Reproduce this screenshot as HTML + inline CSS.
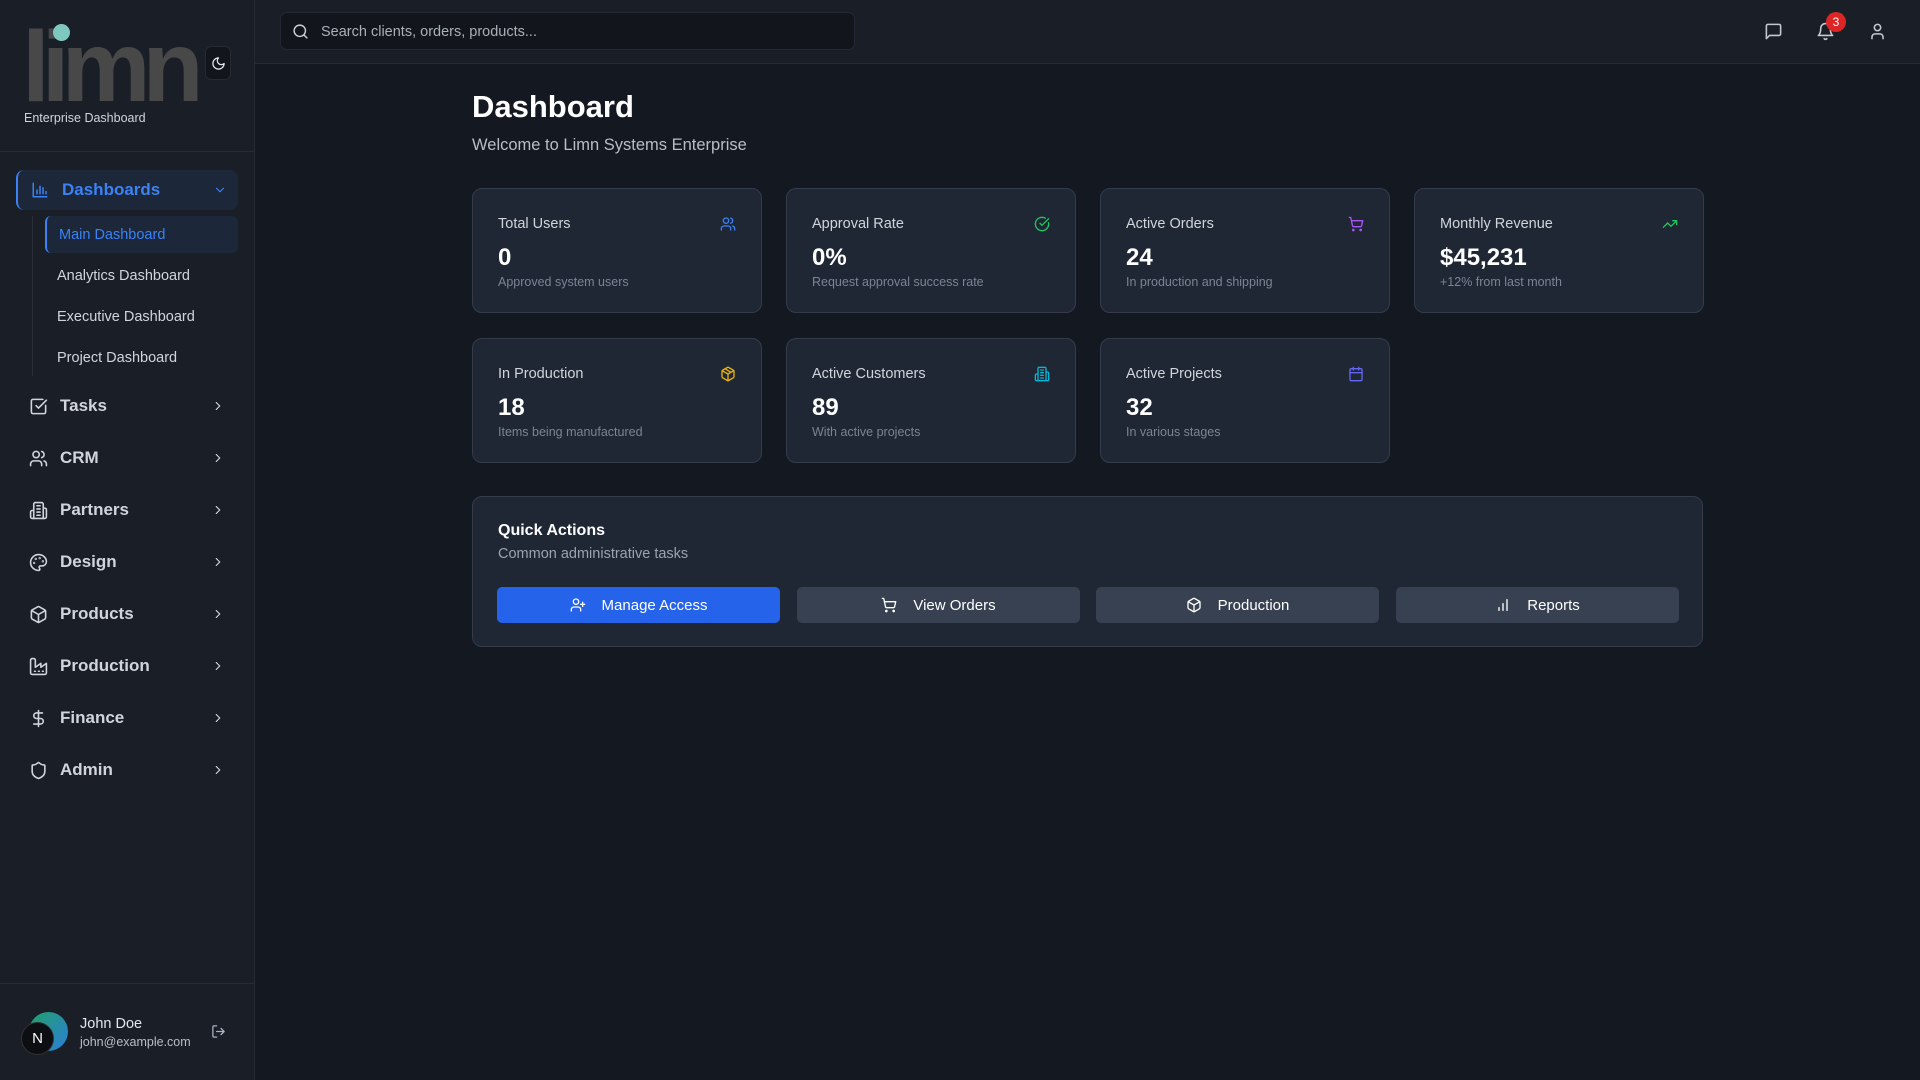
<!DOCTYPE html>
<html><head><meta charset="utf-8"><style>
*{box-sizing:border-box;margin:0;padding:0}
body{width:1920px;height:1080px;background:#141820;font-family:"Liberation Sans",sans-serif;color:#e5e7eb;position:relative;overflow:hidden}
.abs{position:absolute}
svg{fill:none;stroke:currentColor;stroke-width:2;stroke-linecap:round;stroke-linejoin:round}
#side{left:0;top:0;width:255px;height:1080px;background:#1a1e27;border-right:1px solid #252a34}
#hdr{left:255px;top:0;width:1665px;height:64px;background:#1a1e27;border-bottom:1px solid #262b35}
.nav{position:absolute;left:16px;width:222px;height:40px;display:flex;align-items:center;color:#d1d5db;font-size:17px;font-weight:bold}
.nav svg{position:absolute;left:13px;width:19px;height:19px}
.nav span{position:absolute;left:44px}
.nav .ch{position:absolute;left:195px;width:14px;height:14px}
.sub{position:absolute;left:57px;font-size:14.5px;color:#d1d5db}
.card{position:absolute;width:290px;height:125px;background:#1f2735;border:1px solid #343c4b;border-radius:10px}
.card .t{position:absolute;left:25px;top:27px;font-size:14.5px;color:#d1d5db}
.card .v{position:absolute;left:25px;top:55px;font-size:24px;font-weight:bold;color:#fff}
.card .d{position:absolute;left:25px;top:86px;font-size:12.5px;color:#7b8494}
.card svg{position:absolute;right:25px;top:27px;width:16px;height:16px}
.btn{position:absolute;top:587px;height:36px;width:283px;border-radius:5px;background:#374151;color:#fff;font-size:15px;display:flex;align-items:center;justify-content:center;gap:16px}
.btn svg{width:16px;height:16px}
</style></head><body>
<div id="side" class="abs">
  <div class="abs" style="left:22px;top:17px;font-size:100px;font-weight:bold;color:#484848;letter-spacing:-8px;line-height:100px;font-family:'Liberation Sans',sans-serif">limn</div>
  <div class="abs" style="left:53px;top:24px;width:17px;height:17px;border-radius:50%;background:#7fc8c0"></div>
  <div class="abs" style="left:205px;top:46px;width:26px;height:34px;background:#12151c;border-radius:6px;border:1px solid #252a33;color:#e5e7eb"><svg style="position:absolute;left:5px;top:9px;width:15px;height:15px" viewBox="0 0 24 24"><path d="M12 3a6 6 0 0 0 9 9 9 9 0 1 1-9-9Z"/></svg></div>
  <div class="abs" style="left:24px;top:111px;font-size:12.5px;color:#d1d5db">Enterprise Dashboard</div>
  <div class="abs" style="left:0;top:151px;width:255px;height:1px;background:#272c36"></div>
  <div class="nav" style="top:170px;background:#1c2739;border-left:2px solid #3b82f6;border-radius:8px;color:#3b82f6">
    <svg viewBox="0 0 24 24"><path d="M3 3v18h18M8 17v-5M12 17V7M16 17v-8M20 17v-3" transform="scale(.95)"/></svg><span style="font-size:17px">Dashboards</span>
    <svg class="ch" viewBox="0 0 24 24"><path d="m6 9 6 6 6-6"/></svg></div>
  <div class="abs" style="left:32px;top:216px;width:1px;height:160px;background:#2a2f39"></div>
  <div class="abs" style="left:45px;top:216px;width:193px;height:37px;background:#1c2739;border-left:2px solid #3b82f6;border-radius:6px"></div>
  <div class="sub" style="top:227px;left:59px;color:#3b82f6">Main Dashboard</div>
  <div class="sub" style="top:268px">Analytics Dashboard</div>
  <div class="sub" style="top:309px">Executive Dashboard</div>
  <div class="sub" style="top:350px">Project Dashboard</div>
  <div class="nav" style="top:386px"><svg viewBox="0 0 24 24"><path d="M21 10.5V19a2 2 0 0 1-2 2H5a2 2 0 0 1-2-2V5a2 2 0 0 1 2-2h12.5"/><path d="m9 11 3 3L22 4"/></svg><span>Tasks</span><svg class="ch" viewBox="0 0 24 24"><path d="m9 18 6-6-6-6"/></svg></div>
  <div class="nav" style="top:438px"><svg viewBox="0 0 24 24"><path d="M16 21v-2a4 4 0 0 0-4-4H6a4 4 0 0 0-4 4v2"/><circle cx="9" cy="7" r="4"/><path d="M22 21v-2a4 4 0 0 0-3-3.87M16 3.13a4 4 0 0 1 0 7.75"/></svg><span>CRM</span><svg class="ch" viewBox="0 0 24 24"><path d="m9 18 6-6-6-6"/></svg></div>
  <div class="nav" style="top:490px"><svg viewBox="0 0 24 24"><path d="M6 22V4a2 2 0 0 1 2-2h8a2 2 0 0 1 2 2v18Z"/><path d="M6 12H4a2 2 0 0 0-2 2v6a2 2 0 0 0 2 2h2M18 9h2a2 2 0 0 1 2 2v9a2 2 0 0 1-2 2h-2M10 6h4M10 10h4M10 14h4M10 18h4"/></svg><span>Partners</span><svg class="ch" viewBox="0 0 24 24"><path d="m9 18 6-6-6-6"/></svg></div>
  <div class="nav" style="top:542px"><svg viewBox="0 0 24 24"><circle cx="13.5" cy="6.5" r=".5"/><circle cx="17.5" cy="10.5" r=".5"/><circle cx="8.5" cy="7.5" r=".5"/><circle cx="6.5" cy="12.5" r=".5"/><path d="M12 2C6.5 2 2 6.5 2 12s4.5 10 10 10c.93 0 1.65-.75 1.65-1.69 0-.44-.18-.84-.44-1.13-.29-.29-.44-.65-.44-1.13a1.64 1.64 0 0 1 1.67-1.67h2c3.05 0 5.55-2.5 5.55-5.55C21.97 6.01 17.46 2 12 2z"/></svg><span>Design</span><svg class="ch" viewBox="0 0 24 24"><path d="m9 18 6-6-6-6"/></svg></div>
  <div class="nav" style="top:594px"><svg viewBox="0 0 24 24"><path d="M21 8a2 2 0 0 0-1-1.73l-7-4a2 2 0 0 0-2 0l-7 4A2 2 0 0 0 3 8v8a2 2 0 0 0 1 1.73l7 4a2 2 0 0 0 2 0l7-4A2 2 0 0 0 21 16Z"/><path d="m3.3 7 8.7 5 8.7-5M12 22V12"/></svg><span>Products</span><svg class="ch" viewBox="0 0 24 24"><path d="m9 18 6-6-6-6"/></svg></div>
  <div class="nav" style="top:646px"><svg viewBox="0 0 24 24"><path d="M2 20a2 2 0 0 0 2 2h16a2 2 0 0 0 2-2V8l-7 5V8l-7 5V4a2 2 0 0 0-2-2H4a2 2 0 0 0-2 2Z"/><path d="M17 18h1M12 18h1M7 18h1"/></svg><span>Production</span><svg class="ch" viewBox="0 0 24 24"><path d="m9 18 6-6-6-6"/></svg></div>
  <div class="nav" style="top:698px"><svg viewBox="0 0 24 24"><path d="M12 2v20M17 5H9.5a3.5 3.5 0 0 0 0 7h5a3.5 3.5 0 0 1 0 7H6"/></svg><span>Finance</span><svg class="ch" viewBox="0 0 24 24"><path d="m9 18 6-6-6-6"/></svg></div>
  <div class="nav" style="top:750px"><svg viewBox="0 0 24 24"><path d="M20 13c0 5-3.5 7.5-7.66 8.95a1 1 0 0 1-.67-.01C7.5 20.5 4 18 4 13V6a1 1 0 0 1 1-1c2 0 4.5-1.2 6.24-2.72a1.17 1.17 0 0 1 1.52 0C14.51 3.81 17 5 19 5a1 1 0 0 1 1 1z"/></svg><span>Admin</span><svg class="ch" viewBox="0 0 24 24"><path d="m9 18 6-6-6-6"/></svg></div>
  <div class="abs" style="left:0;top:983px;width:255px;height:1px;background:#272c36"></div>
  <div class="abs" style="left:29px;top:1012px;width:39px;height:39px;border-radius:50%;background:linear-gradient(135deg,#22a06b,#2b7fd8)"></div>
  <div class="abs" style="left:21px;top:1022px;width:33px;height:33px;border-radius:50%;background:#0c0e12;border:1px solid #333;color:#fff;font-size:15px;text-align:center;line-height:31px">N</div>
  <div class="abs" style="left:80px;top:1016px;font-size:14.5px;color:#e5e7eb">John Doe</div>
  <div class="abs" style="left:80px;top:1035px;font-size:12.5px;color:#b8bec8">john@example.com</div>
  <svg class="abs" style="left:211px;top:1024px;width:15px;height:15px;color:#aeb4be" viewBox="0 0 24 24"><path d="M9 21H5a2 2 0 0 1-2-2V5a2 2 0 0 1 2-2h4M16 17l5-5-5-5M21 12H9"/></svg>
</div>
<div id="hdr" class="abs">
  <div class="abs" style="left:25px;top:12px;width:575px;height:38px;background:#12151c;border:1px solid #232833;border-radius:7px"></div>
  <svg class="abs" style="left:37px;top:23px;width:17px;height:17px;color:#cbd0d8" viewBox="0 0 24 24"><circle cx="11" cy="11" r="8"/><path d="m21 21-4.3-4.3"/></svg>
  <div class="abs" style="left:66px;top:24px;font-size:14.5px;color:#aab0ba">Search clients, orders, products...</div>
  <svg class="abs" style="left:1509px;top:22px;width:19px;height:19px;color:#c4c9d1" viewBox="0 0 24 24"><path d="M21 15a2 2 0 0 1-2 2H7l-4 4V5a2 2 0 0 1 2-2h14a2 2 0 0 1 2 2z"/></svg>
  <svg class="abs" style="left:1561px;top:22px;width:19px;height:19px;color:#c4c9d1" viewBox="0 0 24 24"><path d="M6 8a6 6 0 0 1 12 0c0 7 3 9 3 9H3s3-2 3-9M10.3 21a1.94 1.94 0 0 0 3.4 0"/></svg>
  <div class="abs" style="left:1571px;top:12px;width:20px;height:20px;border-radius:50%;background:#dc2626;color:#fff;font-size:12px;text-align:center;line-height:20px">3</div>
  <svg class="abs" style="left:1613px;top:22px;width:19px;height:19px;color:#c4c9d1" viewBox="0 0 24 24"><path d="M19 21v-2a4 4 0 0 0-4-4H9a4 4 0 0 0-4 4v2"/><circle cx="12" cy="7" r="4"/></svg>
</div>
<div class="abs" style="left:472px;top:89px;font-size:31px;font-weight:bold;color:#fff">Dashboard</div>
<div class="abs" style="left:472px;top:136px;font-size:16.5px;color:#b8bec8">Welcome to Limn Systems Enterprise</div>

<div class="card" style="left:472px;top:188px"><div class="t">Total Users</div><div class="v">0</div><div class="d">Approved system users</div><svg style="color:#3b82f6" viewBox="0 0 24 24"><path d="M16 21v-2a4 4 0 0 0-4-4H6a4 4 0 0 0-4 4v2"/><circle cx="9" cy="7" r="4"/><path d="M22 21v-2a4 4 0 0 0-3-3.87M16 3.13a4 4 0 0 1 0 7.75"/></svg></div>
<div class="card" style="left:786px;top:188px"><div class="t">Approval Rate</div><div class="v">0%</div><div class="d">Request approval success rate</div><svg style="color:#22c55e" viewBox="0 0 24 24"><path d="M21.8 10A10 10 0 1 1 17 3.34"/><path d="m9 11 3 3L22 4"/></svg></div>
<div class="card" style="left:1100px;top:188px"><div class="t">Active Orders</div><div class="v">24</div><div class="d">In production and shipping</div><svg style="color:#a855f7" viewBox="0 0 24 24"><circle cx="8" cy="21" r="1"/><circle cx="19" cy="21" r="1"/><path d="M2.05 2.05h2l2.66 12.42a2 2 0 0 0 2 1.58h9.78a2 2 0 0 0 1.95-1.57l1.65-7.43H5.12"/></svg></div>
<div class="card" style="left:1414px;top:188px"><div class="t">Monthly Revenue</div><div class="v">$45,231</div><div class="d">+12% from last month</div><svg style="color:#22c55e" viewBox="0 0 24 24"><path d="m22 7-8.5 8.5-5-5L2 17M16 7h6v6"/></svg></div>
<div class="card" style="left:472px;top:338px"><div class="t">In Production</div><div class="v">18</div><div class="d">Items being manufactured</div><svg style="color:#eab308" viewBox="0 0 24 24"><path d="M21 8a2 2 0 0 0-1-1.73l-7-4a2 2 0 0 0-2 0l-7 4A2 2 0 0 0 3 8v8a2 2 0 0 0 1 1.73l7 4a2 2 0 0 0 2 0l7-4A2 2 0 0 0 21 16Z"/><path d="m3.3 7 8.7 5 8.7-5M12 22V12M7.5 4.27l9 5.15"/></svg></div>
<div class="card" style="left:786px;top:338px"><div class="t">Active Customers</div><div class="v">89</div><div class="d">With active projects</div><svg style="color:#06b6d4" viewBox="0 0 24 24"><path d="M6 22V4a2 2 0 0 1 2-2h8a2 2 0 0 1 2 2v18Z"/><path d="M6 12H4a2 2 0 0 0-2 2v6a2 2 0 0 0 2 2h2M18 9h2a2 2 0 0 1 2 2v9a2 2 0 0 1-2 2h-2M10 6h4M10 10h4M10 14h4M10 18h4"/></svg></div>
<div class="card" style="left:1100px;top:338px"><div class="t">Active Projects</div><div class="v">32</div><div class="d">In various stages</div><svg style="color:#6366f1" viewBox="0 0 24 24"><rect x="3" y="4" width="18" height="18" rx="2"/><path d="M16 2v4M8 2v4M3 10h18"/></svg></div>

<div class="abs" style="left:472px;top:496px;width:1231px;height:151px;background:#1f2735;border:1px solid #343c4b;border-radius:10px">
  <div class="abs" style="left:25px;top:25px;font-size:16px;font-weight:bold;color:#fff">Quick Actions</div>
  <div class="abs" style="left:25px;top:49px;font-size:14.5px;color:#9ca3af">Common administrative tasks</div>
</div>
<div class="btn" style="left:497px;background:#2563eb"><svg viewBox="0 0 24 24"><path d="M16 21v-2a4 4 0 0 0-4-4H6a4 4 0 0 0-4 4v2"/><circle cx="9" cy="7" r="4"/><path d="M19 8v6M22 11h-6"/></svg>Manage Access</div>
<div class="btn" style="left:797px"><svg viewBox="0 0 24 24"><circle cx="8" cy="21" r="1"/><circle cx="19" cy="21" r="1"/><path d="M2.05 2.05h2l2.66 12.42a2 2 0 0 0 2 1.58h9.78a2 2 0 0 0 1.95-1.57l1.65-7.43H5.12"/></svg>View Orders</div>
<div class="btn" style="left:1096px"><svg viewBox="0 0 24 24"><path d="M21 8a2 2 0 0 0-1-1.730l-7-4a2 2 0 0 0-2 0l-7 4A2 2 0 0 0 3 8v8a2 2 0 0 0 1 1.73l7 4a2 2 0 0 0 2 0l7-4A2 2 0 0 0 21 16Z"/><path d="m3.3 7 8.7 5 8.7-5M12 22V12"/></svg>Production</div>
<div class="btn" style="left:1396px"><svg viewBox="0 0 24 24"><path d="M12 20V10M18 20V4M6 20v-4"/></svg>Reports</div>
</body></html>
